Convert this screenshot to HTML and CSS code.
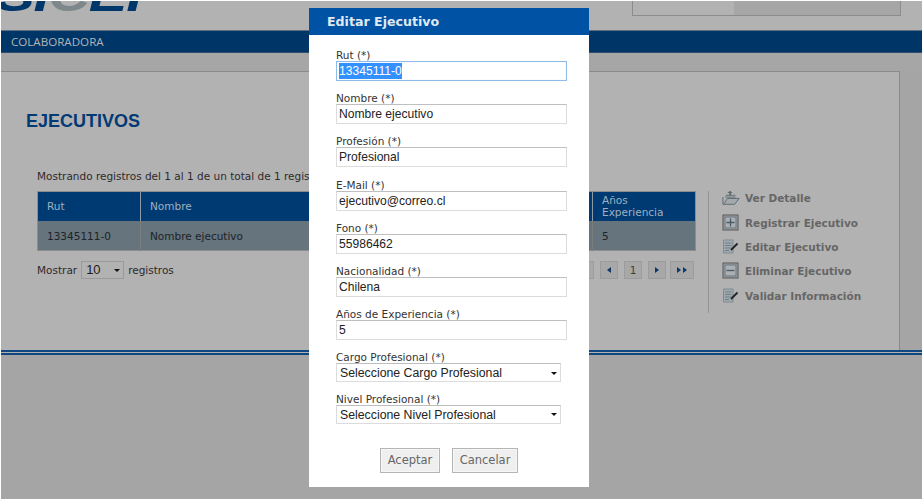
FILE: index.html
```html
<!DOCTYPE html>
<html lang="es">
<head>
<meta charset="utf-8">
<title>Editar Ejecutivo</title>
<link rel="stylesheet" href="styles.css">
</head>
<body>
<div class="screen">
  <header class="top">
    <div class="logo"><span>SI</span><span class="logo-gray">C</span><span>EP</span></div>
    <div class="search"><div class="search-fill"></div></div>
  </header>
  <nav class="nav">COLABORADORA</nav>
  <div class="band"></div>
  <main class="panel">
    <h1 class="title">EJECUTIVOS</h1>
    <div class="work">
      <div class="list">
        <p class="info">Mostrando registros del 1 al 1 de un total de 1 registros</p>
        <table class="grid">
          <thead>
            <tr><th class="c1">Rut</th><th class="c2">Nombre</th><th class="c3">Profesión</th><th class="c4">Años Experiencia</th></tr>
          </thead>
          <tbody>
            <tr><td>13345111-0</td><td>Nombre ejecutivo</td><td>Profesional</td><td>5</td></tr>
          </tbody>
        </table>
        <div class="under">
          <div class="length">Mostrar <span class="mini-select">10<i class="caret"></i></span> registros</div>
          <div class="pager">
            <span class="pg pg-wide"><i class="tl"></i><i class="tl"></i></span>
            <span class="pg"><i class="tl"></i></span>
            <span class="pg">1</span>
            <span class="pg"><i class="tr"></i></span>
            <span class="pg pg-wide pg-last"><i class="tr"></i><i class="tr"></i></span>
          </div>
        </div>
      </div>
      <aside class="actions">
        <a class="act">
          <svg class="ic" viewBox="0 0 20 18"><path d="M9 1 12 3.500H10V6H8V3.500H6Z" fill="#5c6a72"/><path d="M4 6H15M3.500 8H15" stroke="#5c6a72" fill="none"/><path d="M1 8V16H14L19 9.500H6L2.500 15" stroke="#58646c" fill="#a3aaad"/></svg>
          Ver Detalle</a>
        <a class="act">
          <svg class="ic" viewBox="0 0 18 18"><rect x="1" y="1" width="15" height="15" fill="#a2a5a6" stroke="#555"/><rect x="3" y="3" width="11" height="11" fill="#aab0b3" stroke="#66757e"/><path d="M8.500 4.500V12.500M4.500 8.500H12.500" stroke="#4a5a66" stroke-width="1.300"/></svg>
          Registrar Ejecutivo</a>
        <a class="act">
          <svg class="ic" viewBox="0 0 18 18"><path d="M1.500 2H11V15H1.500Z" fill="#a0aaae" stroke="#7d8c94"/><path d="M3 5H9.500M3 7.500H9.500M3 10H9.500M3 12.500H7" stroke="#6e7f88"/><path d="M9 12 15.500 5.500" stroke="#222" stroke-width="1.800"/></svg>
          Editar Ejecutivo</a>
        <a class="act">
          <svg class="ic" viewBox="0 0 18 18"><rect x="1" y="1" width="15" height="15" fill="#a2a5a6" stroke="#555"/><rect x="3" y="3" width="11" height="11" fill="#aab0b3" stroke="#66757e"/><path d="M4.500 8.500H12.500" stroke="#4a5a66" stroke-width="1.300"/></svg>
          Eliminar Ejecutivo</a>
        <a class="act">
          <svg class="ic" viewBox="0 0 18 18"><path d="M1.500 2H11V15H1.500Z" fill="#a0aaae" stroke="#7d8c94"/><path d="M3 5H9.500M3 7.500H9.500M3 10H9.500M3 12.500H7" stroke="#6e7f88"/><path d="M9 12 15.500 5.500" stroke="#222" stroke-width="1.800"/></svg>
          Validar Información</a>
      </aside>
    </div>
  </main>
  <div class="rule"></div>

  <section class="modal">
    <h2 class="modal-title">Editar Ejecutivo</h2>
    <form class="form">
      <label class="field"><span>Rut (*)</span><span class="input focus"><span class="sel">13345111-0</span></span></label>
      <label class="field"><span>Nombre (*)</span><span class="input">Nombre ejecutivo</span></label>
      <label class="field"><span>Profesión (*)</span><span class="input">Profesional</span></label>
      <label class="field"><span>E-Mail (*)</span><span class="input">ejecutivo@correo.cl</span></label>
      <label class="field"><span>Fono (*)</span><span class="input">55986462</span></label>
      <label class="field"><span>Nacionalidad (*)</span><span class="input">Chilena</span></label>
      <label class="field"><span>Años de Experiencia (*)</span><span class="input">5</span></label>
      <label class="field field-s"><span>Cargo Profesional (*)</span><span class="select">Seleccione Cargo Profesional<i class="caret"></i></span></label>
      <label class="field field-s"><span>Nivel Profesional (*)</span><span class="select">Seleccione Nivel Profesional<i class="caret"></i></span></label>
      <div class="buttons"><span class="btn b1">Aceptar</span><span class="btn b2">Cancelar</span></div>
    </form>
  </section>
</div>
</body>
</html>
```
FILE: styles.css
```css
* { box-sizing: border-box; }
html, body { margin: 0; padding: 0; }
body { background: #fff; font-family: "DejaVu Sans", Verdana, sans-serif; }
.screen {
  position: relative;
  width: 921px;
  height: 498px;
  margin: 1px 0 0 1px;
  background: #a5a5a5;
  overflow: hidden;
}
.top {
  height: 29px;
  background: #b2b2b2;
  position: relative;
  display: flex;
  justify-content: flex-end;
  padding-right: 21px;
}
.logo {
  position: absolute;
  left: -5px;
  top: -27px;
  font: italic 700 44px/1 "Liberation Sans", Arial, sans-serif;
  color: #00376b;
  transform-origin: left top;
  transform: scaleX(1.32);
  letter-spacing: -1px;
  white-space: nowrap;
}
.logo-gray { color: #7d878c; }
.search {
  width: 269px;
  height: 15px;
  border: 1px solid #8c8c8c;
  border-top: 0;
  background: #b2b2b2;
}
.search-fill { margin-left: 101px; height: 100%; background: #a6a6a6; }
.nav {
  height: 23px;
  background: #003567;
  border-top: 1px solid #5f6f80;
  border-bottom: 1px solid #2e4c6c;
  color: #b4b4b4;
  font: 11.600px/22px "Open Sans", "Liberation Sans", sans-serif;
  padding-left: 10px;
}
.band { height: 18px; background: #a6a6a6; }
.panel {
  width: 899px;
  height: 279px;
  background: #b2b2b2;
  border-top: 1px solid #8a8a8a;
  border-right: 1px solid #8a8a8a;
  padding: 38px 0 0 25px;
}
.title {
  margin: 0;
  font: 700 18px/22px "Liberation Sans", Arial, sans-serif;
  color: #023a75;
}
.work { display: flex; margin-top: 34px; padding-left: 11px; }
.list { width: 658px; flex: none; }
.info { margin: 0; height: 20px; font-size: 10.500px; line-height: 20px; color: #2e2a2c; white-space: nowrap; }
.grid {
  border-collapse: collapse;
  table-layout: fixed;
  width: 658px;
  margin-top: 5px;
  border: 1px solid #8d8d8d;
  font-size: 10.500px;
}
.grid th {
  background: #003a72;
  color: #9fb0c0;
  font-weight: 400;
  text-align: left;
  height: 29px;
  padding: 0 9px;
  line-height: 12px;
  border-right: 1px solid #8d9aa6;
}
.grid th:last-child { border-right: 0; }
.grid td {
  background: #65747d;
  color: #1d2327;
  height: 30px;
  padding: 1px 9px 0;
  border-right: 1px solid #7c7c7c;
}
.grid td:last-child { border-right: 0; }
.c1 { width: 103px; }
.c2 { width: 200px; }
.c3 { width: 252px; }
.c4 { width: 103px; }
.under { display: flex; justify-content: space-between; align-items: center; margin-top: 9px; height: 20px; }
.length { font-size: 10.500px; color: #2e2a2c; display: flex; align-items: center; gap: 4px; }
.mini-select {
  position: relative;
  display: inline-block;
  width: 43px;
  height: 18px;
  border: 1px solid #9a9a9a;
  font: 13px/16px "Liberation Sans", Arial, sans-serif;
  padding-left: 4px;
  color: #1c1c1c;
}
.caret {
  position: absolute;
  right: 3px;
  top: 50%;
  margin-top: -1px;
  border-left: 3px solid transparent;
  border-right: 3px solid transparent;
  border-top: 3px solid #111;
}
.pager { display: flex; gap: 6px; padding-right: 1px; }
.pg {
  display: flex;
  align-items: center;
  justify-content: center;
  gap: 2px;
  width: 18px;
  height: 18px;
  background: #a8a8a8;
  border: 1px solid #9c9c9c;
  font-size: 10.500px;
  color: #3c3c3c;
}
.pg-wide { width: 24px; }
.pg-last { margin-left: -2px; }
.tl, .tr { border-top: 3px solid transparent; border-bottom: 3px solid transparent; }
.tl { border-right: 4px solid #0c3768; }
.tr { border-left: 4px solid #0c3768; }
.actions {
  margin: 25px 0 0 13px;
  width: 190px;
  height: 122px;
  border-left: 1px solid #959595;
  padding-left: 13px;
  display: flex;
  flex-direction: column;
}
.act {
  display: flex;
  align-items: center;
  gap: 5px;
  flex: none;
  height: 24.400px;
  font-size: 10.500px;
  font-weight: 700;
  color: #666;
  white-space: nowrap;
}
.act:first-child { margin-top: -5px; }
.ic { width: 18px; height: 18px; flex: none; }
.rule {
  height: 5px;
  background: #b2b2b2;
  border-top: 2px solid #0f4880;
  border-bottom: 2px solid #0f4880;
}
.modal {
  position: absolute;
  left: 308px;
  top: 7px;
  width: 280px;
  height: 479px;
  background: #fff;
}
.modal-title {
  margin: 0;
  height: 27px;
  padding-left: 18px;
  background: #0052a4;
  color: #dfe9f3;
  font: 700 12.600px/27px "DejaVu Sans", Verdana, sans-serif;
}
.form { padding: 15px 21px 0 27px; }
.field { display: block; height: 43.200px; font-size: 10.500px; line-height: 11px; color: #333; }
.field > span:first-child { display: block; height: 11px; }
.input {
  display: block;
  width: 231px;
  height: 20px;
  border: 1px solid #dcdcdc;
  border-top-color: #bfbfbf;
  background: #fff;
  font: 12.100px/19px "Liberation Sans", Arial, sans-serif;
  color: #222;
  padding-left: 2px;
}
.focus { border-color: #8fbce6; box-shadow: inset 0 0 1px #bcd8f2; }
.sel { background: #3390ff; color: #fff; display: inline-block; line-height: 16px; vertical-align: top; margin-top: 1px; }
.field-s { height: 41.500px; }
.select {
  position: relative;
  display: block;
  width: 225px;
  height: 19px;
  border: 1px solid #dcdcdc;
  border-top-color: #bdbdbd;
  background: #fff;
  font: 12.300px/18px "Liberation Sans", Arial, sans-serif;
  color: #222;
  padding-left: 3px;
}
.buttons { display: flex; gap: 12px; padding-left: 44px; margin-top: 13px; }
.btn {
  height: 25px;
  background: #efefef;
  border: 1px solid #b5b5b5;
  box-shadow: inset 0 0 0 1px #f6f6f6;
  font-size: 11.500px;
  line-height: 23px;
  color: #666;
  text-align: center;
}
.b1 { width: 60px; }
.b2 { width: 66px; }
```
